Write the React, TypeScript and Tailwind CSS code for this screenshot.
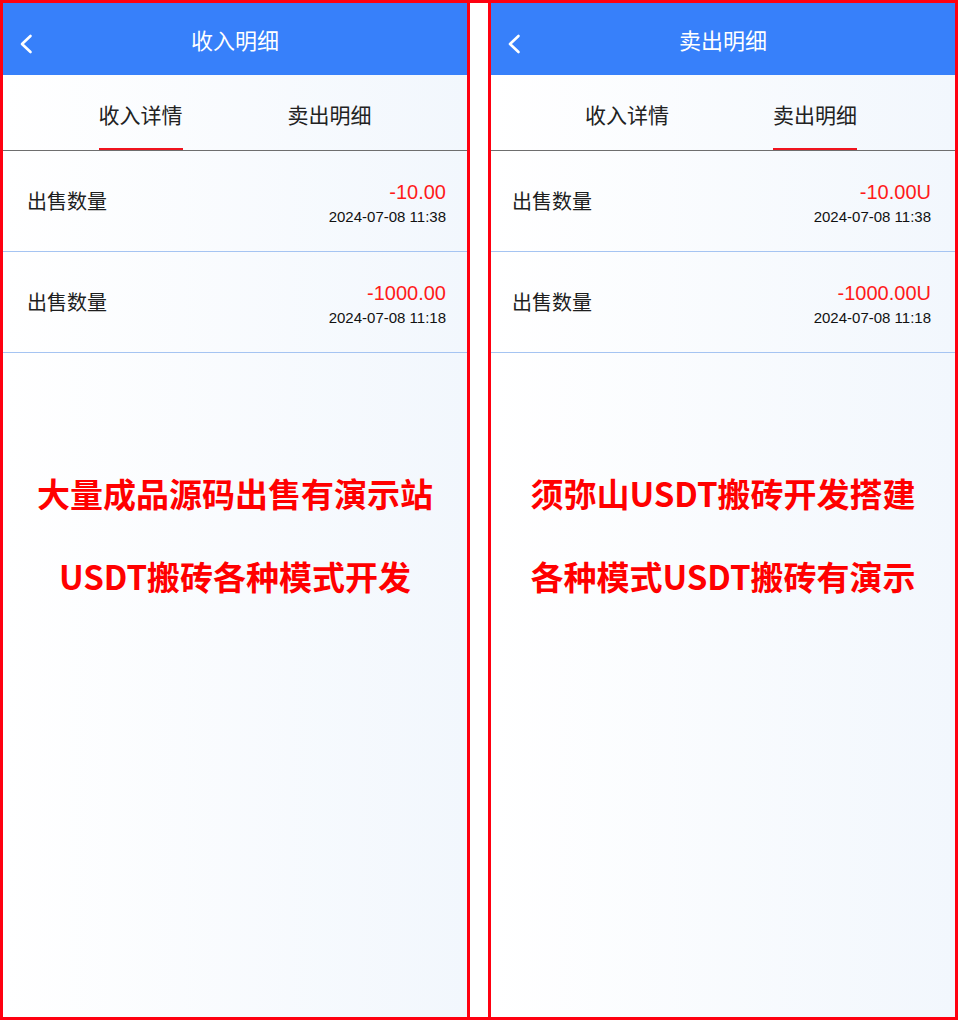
import React from "react";

type Record = { amount: string; time: string };

const cjk = { fontFamily: '"Noto Sans CJK SC", "Noto Sans", sans-serif' };
const latin = { fontFamily: '"Liberation Sans", Arial, "Noto Sans CJK SC", sans-serif' };

function BackIcon() {
  return (
    <svg width="14" height="20" viewBox="0 0 14 20" fill="none">
      <polyline
        points="11.5,2 3,10 11.5,18"
        stroke="#ffffff"
        strokeWidth="2.6"
        strokeLinecap="round"
        strokeLinejoin="round"
      />
    </svg>
  );
}

function Panel({
  title,
  active,
  suffix,
  promo,
  className,
  tabPad,
  rowPad,
}: {
  title: string;
  active: number;
  suffix: string;
  promo: string[];
  className: string;
  tabPad: string;
  rowPad: string;
}) {
  const tabs = ["收入详情", "卖出明细"];
  const records: Record[] = [
    { amount: "-10.00", time: "2024-07-08 11:38" },
    { amount: "-1000.00", time: "2024-07-08 11:18" },
  ];

  return (
    <div className={"flex h-full w-[467px] flex-col bg-linear-to-r from-white to-[#f2f7fd] " + className}>
      <div className="relative flex h-[72px] items-center justify-center bg-[#3780fa]">
        <div className="absolute left-[16px] top-[31px]">
          <BackIcon />
        </div>
        <span className="text-[22px] leading-none text-white" style={cjk}>
          {title}
        </span>
      </div>

      <div className={"flex h-[76px] border-b border-[#6e6e6e] " + tabPad}>
        {tabs.map((t, i) => (
          <div key={t} className="flex flex-1 items-end justify-center">
            <span
              className={
                "border-b-[2px] pb-[19px] text-[21px] leading-[30px] text-[#222] " +
                (i === active ? "border-[#f0141e]" : "border-transparent")
              }
              style={cjk}
            >
              {t}
            </span>
          </div>
        ))}
      </div>

      {records.map((r) => (
        <div
          key={r.time}
          className={"flex h-[101px] items-center justify-between border-b border-[#a5c4f2] " + rowPad}
        >
          <span className="text-[20px] leading-none text-[#1e1e1e]" style={cjk}>
            出售数量
          </span>
          <div className="flex flex-col items-end pt-[4px]">
            <span className="text-[20px] leading-[24px] text-[#ff1a1a]" style={latin}>
              {r.amount}
              {suffix}
            </span>
            <span className="mt-[3px] text-[15px] leading-[20px] text-[#111]" style={latin}>
              {r.time}
            </span>
          </div>
        </div>
      ))}

      <div className="flex flex-col items-center gap-[43px] pt-[120px]">
        {promo.map((p) => (
          <span key={p} className="text-[33px] font-bold leading-[40px] text-[#ff0000]" style={cjk}>
            {p}
          </span>
        ))}
      </div>
    </div>
  );
}

export default function App() {
  return (
    <div className="flex h-[1020px] w-[958px] border-[3px] border-[#ff0010] bg-white">
      <Panel
        title="收入明细"
        active={0}
        suffix=""
        promo={["大量成品源码出售有演示站", "USDT搬砖各种模式开发"]}
        className="border-r-[3px] border-[#ff0010]"
        tabPad="pl-[43px] pr-[43px]"
        rowPad="pl-[24px] pr-[21px]"
      />
      <div className="w-[18px]" />
      <Panel
        title="卖出明细"
        active={1}
        suffix="U"
        promo={["须弥山USDT搬砖开发搭建", "各种模式USDT搬砖有演示"]}
        className="border-l-[3px] border-[#ff0010]"
        tabPad="pl-[42px] pr-[46px]"
        rowPad="pl-[21px] pr-[24px]"
      />
    </div>
  );
}
